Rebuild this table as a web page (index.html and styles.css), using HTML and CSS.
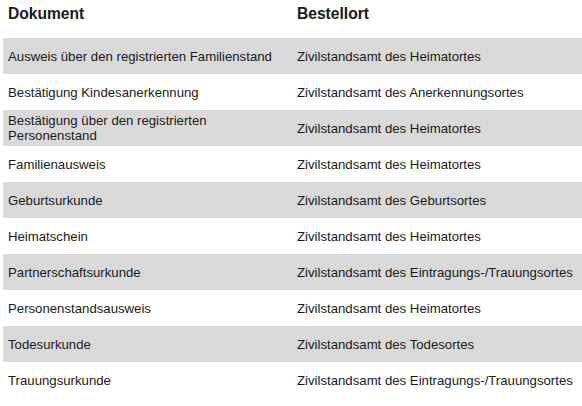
FILE: index.html
```html
<!DOCTYPE html>
<html lang="de">
<head>
<meta charset="utf-8">
<link rel="stylesheet" href="styles.css">
</head>
<body>
<div class="page">
<table class="doc-table">
  <thead>
    <tr><th class="col-doc">Dokument</th><th class="col-ort">Bestellort</th></tr>
  </thead>
  <tbody>
    <tr class="shade"><td>Ausweis über den registrierten Familienstand</td><td>Zivilstandsamt des Heimatortes</td></tr>
    <tr><td>Bestätigung Kindesanerkennung</td><td>Zivilstandsamt des Anerkennungsortes</td></tr>
    <tr class="shade"><td class="two-line">Bestätigung über den registrierten Personenstand</td><td>Zivilstandsamt des Heimatortes</td></tr>
    <tr><td>Familienausweis</td><td>Zivilstandsamt des Heimatortes</td></tr>
    <tr class="shade"><td>Geburtsurkunde</td><td>Zivilstandsamt des Geburtsortes</td></tr>
    <tr><td>Heimatschein</td><td>Zivilstandsamt des Heimatortes</td></tr>
    <tr class="shade"><td>Partnerschaftsurkunde</td><td>Zivilstandsamt des Eintragungs-/Trauungsortes</td></tr>
    <tr><td>Personenstandsausweis</td><td>Zivilstandsamt des Heimatortes</td></tr>
    <tr class="shade"><td>Todesurkunde</td><td>Zivilstandsamt des Todesortes</td></tr>
    <tr><td>Trauungsurkunde</td><td>Zivilstandsamt des Eintragungs-/Trauungsortes</td></tr>
  </tbody>
</table>
</div>
</body>
</html>
```

FILE: styles.css
```css
html, body {
  margin: 0;
  padding: 0;
  background: #ffffff;
}
.page {
  padding-left: 3px;
  font-family: "Liberation Sans", Arial, sans-serif;
  color: #1a1a1a;
}
.doc-table {
  border-collapse: collapse;
  width: 579px;
  table-layout: fixed;
}
.col-doc { width: 289px; }
.doc-table th {
  text-align: left;
  font-weight: bold;
  font-size: 15.6px;
  height: 38px;
  padding: 0 5px 10px 5px;
  vertical-align: middle;
  box-sizing: border-box;
}
.doc-table td {
  font-size: 13.2px;
  line-height: 15px;
  height: 36px;
  padding: 0 5px;
  vertical-align: middle;
  box-sizing: border-box;
}
.doc-table tr.shade td {
  background: #d9d9d9;
}
.two-line {
  padding-right: 40px !important;
}
```
